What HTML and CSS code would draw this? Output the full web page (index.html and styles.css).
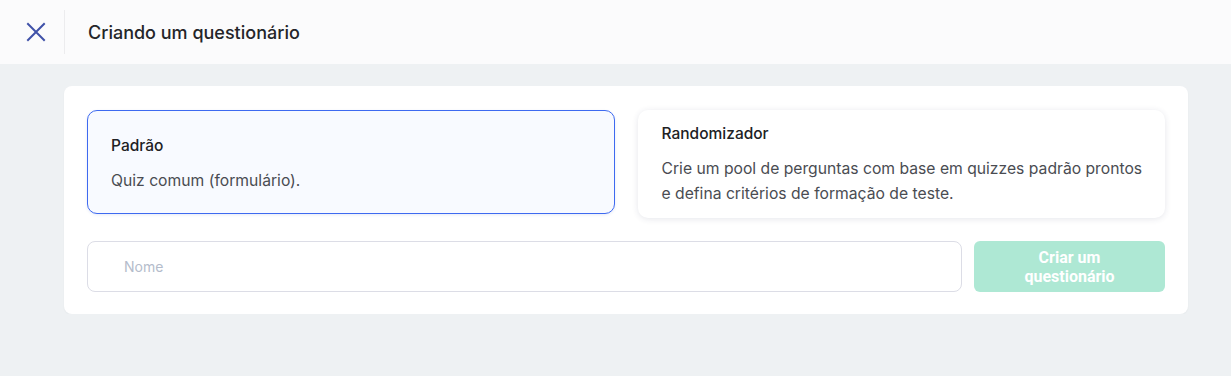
FILE: index.html
```html
<!DOCTYPE html>
<html lang="pt">
<head>
	<meta charset="utf-8" />
	<title>Criando um questionário</title>
	<link rel="stylesheet" href="styles.css">
</head>
<body>
<!-- barra superior -->
<div class="topbar">
	<div class="topbar-close">
		<svg width="20" height="20" viewBox="0 0 20 20" fill="none" stroke="#3f51a8" stroke-width="2" stroke-linecap="square">
			<path d="M2 2 L18 18 M18 2 L2 18" />
		</svg>
	</div>
	<div class="topbar-title">Criando um questionário</div>
</div>
<!-- painel principal -->
<div class="panel">
	<div class="types">
		<div class="type type-active">
			<div class="type-name">Padrão</div>
			<div class="type-desc">Quiz comum (formulário).</div>
		</div>
		<div class="type type-random">
			<div class="type-name">Randomizador</div>
			<div class="type-desc">Crie um pool de perguntas com base em quizzes padrão prontos e defina critérios de formação de teste.</div>
		</div>
	</div>
	<div class="create">
		<input class="create-name" type="text" placeholder="Nome" />
		<button class="create-btn" disabled>Criar um questionário</button>
	</div>
</div>
</body>
</html>
```

FILE: styles.css
```css
/* página */
body {
	margin: 0;
	background-color: #eef1f3;
	font-family: Inter, "Noto Sans", sans-serif;
	color: #222;
}
/* barra superior */
.topbar {
	height: 64px;
	background-color: #fbfbfc;
	display: flex;
	align-items: center;
}
.topbar-close {
	width: 65px;
	height: 44px;
	display: flex;
	align-items: center;
	justify-content: center;
	border-right: 1px solid #ececee;
	box-sizing: border-box;
	padding-left: 8px;
}
.topbar-title {
	padding-left: 23px;
	font-size: 18px;
	font-weight: 500;
	color: #242529;
}
/* painel branco */
.panel {
	width: 1124px;
	margin: 22px 0 0 64px;
	padding: 24px 23px 22px 23px;
	box-sizing: border-box;
	background-color: #fff;
	border-radius: 8px;
	box-shadow: 0 1px 2px rgba(30, 40, 60, 0.04);
}
/* tipos de questionário */
.types {
	display: grid;
	grid-template-columns: 1fr 1fr;
	gap: 23px;
	align-items: start;
}
.type {
	border-radius: 10px;
	box-sizing: border-box;
}
.type-active {
	background-color: #f8faff;
	border: 1px solid #3e6af0;
	padding: 25px 23px 20px 23px;
	box-shadow: 0 1px 3px rgba(60, 90, 200, 0.12);
}
.type-random {
	background-color: #fff;
	padding: 14px 16px 12px 24px;
	box-shadow: 0 1px 6px rgba(40, 50, 90, 0.12);
}
.type-name {
	font-size: 15.5px;
	font-weight: 500;
	line-height: 20px;
	color: #202124;
	margin-bottom: 12px;
}
.type-desc {
	font-size: 15.7px;
	line-height: 25px;
	color: #4a4c52;
}
/* linha de criação */
.create {
	display: flex;
	gap: 12px;
	margin-top: 23px;
}
.create-name {
	flex: 1;
	height: 51px;
	box-sizing: border-box;
	border: 1px solid #dcdde6;
	border-radius: 8px;
	padding: 0 36px;
	font-family: inherit;
	font-size: 14px;
	outline: none;
}
.create-name::placeholder {
	color: #b4bccb;
}
.create-btn {
	width: 191px;
	height: 51px;
	border: none;
	border-radius: 6px;
	background-color: #aee8d4;
	color: #fff;
	font-family: "Roboto", sans-serif;
	font-size: 16px;
	font-weight: 700;
	line-height: 19px;
	padding: 0 30px;
}
```
